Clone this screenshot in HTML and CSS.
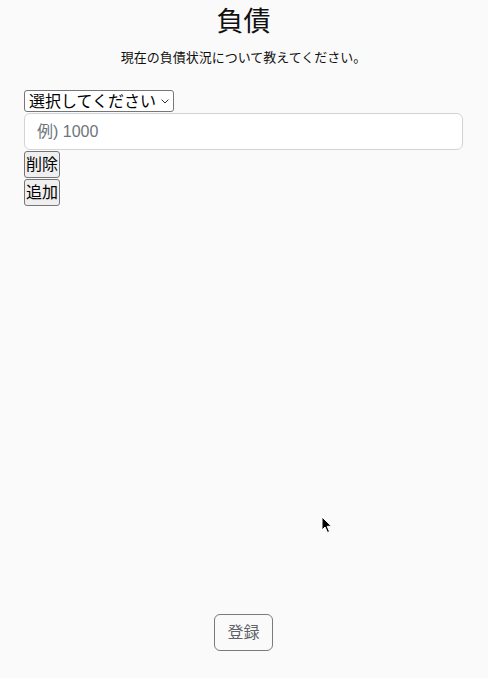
FILE: index.html
```html
<!DOCTYPE html>
<html lang="ja">
<head>
<meta charset="utf-8">
<title>負債</title>
<link rel="stylesheet" href="styles.css">
</head>
<body>
<div class="page">
  <h1 class="title">負債</h1>
  <p class="lead">現在の負債状況について教えてください。</p>
  <div class="form">
    <span class="select-wrap">
      <select class="kind">
        <option>選択してください</option>
      </select>
      <svg class="chevron" width="8" height="5" viewBox="0 0 8 5" aria-hidden="true">
        <path d="M0.6 0.6 L4 4 L7.4 0.6" fill="none" stroke="#333" stroke-width="1"/>
      </svg>
    </span>
    <input class="amount" type="text" placeholder="例) 1000">
    <button class="small-btn" type="button">削除</button>
    <button class="small-btn" type="button">追加</button>
  </div>
  <div class="footer">
    <button class="submit" type="button">登録</button>
  </div>
</div>
<svg class="cursor" width="12" height="18" viewBox="0 0 12 18" aria-hidden="true">
  <path d="M1 1 L1 14 L4 11 L6.5 16.5 L8.5 15.6 L6.2 10.3 L10.5 10.3 Z" fill="#000" stroke="#fff" stroke-width="1"/>
</svg>
</body>
</html>
```
FILE: styles.css
```css
html, body {
  margin: 0;
  padding: 0;
  background: #fafafa;
  height: 100%;
}
body {
  font-family: "Noto Sans", "Noto Sans CJK JP", sans-serif;
  color: #111;
}
.page {
  box-sizing: border-box;
  min-height: 100vh;
  padding: 0 25px 27px 24px;
  display: flex;
  flex-direction: column;
}
.title {
  margin: 0;
  text-align: center;
  font-size: 27px;
  font-weight: 400;
  line-height: 42px;
}
.lead {
  margin: 5px 0 0;
  text-align: center;
  font-size: 13px;
  line-height: 20px;
}
.form {
  margin-top: 23px;
  display: flex;
  flex-direction: column;
  align-items: flex-start;
}
.select-wrap {
  position: relative;
  display: block;
  height: 22px;
}
.kind {
  -webkit-appearance: none;
  appearance: none;
  box-sizing: border-box;
  display: block;
  width: 150px;
  height: 22px;
  margin: 0;
  font-family: inherit;
  font-size: 16px;
  line-height: 20px;
  color: #000;
  background: #fff;
  border: 1px solid #767676;
  border-radius: 3px;
  padding: 0 0 0 4px;
}
.chevron {
  position: absolute;
  left: 137px;
  top: 9px;
  pointer-events: none;
}
.amount {
  box-sizing: border-box;
  margin-top: 1px;
  width: 100%;
  height: 37px;
  padding: 6px 12px;
  font-family: "Liberation Sans", "Noto Sans CJK JP", sans-serif;
  font-size: 16px;
  color: #212529;
  background: #fff;
  border: 1px solid #d0d4d9;
  border-radius: 6px;
}
.amount::placeholder {
  color: #6c757d;
}
.small-btn {
  margin-top: 1px;
  height: 27px;
  padding: 1px 1px;
  font-family: inherit;
  font-size: 16px;
  line-height: 23px;
  color: #000;
  background: #efefef;
  border: 1px solid #767676;
  border-radius: 3px;
}
.footer {
  margin-top: auto;
  display: flex;
  justify-content: center;
}
.submit {
  height: 37px;
  padding: 6px 12px;
  font-family: inherit;
  font-size: 16px;
  line-height: 23px;
  color: #5f6368;
  background: transparent;
  border: 1px solid #7a7a7a;
  border-radius: 6px;
}
.cursor {
  position: absolute;
  left: 321px;
  top: 516px;
}
```
